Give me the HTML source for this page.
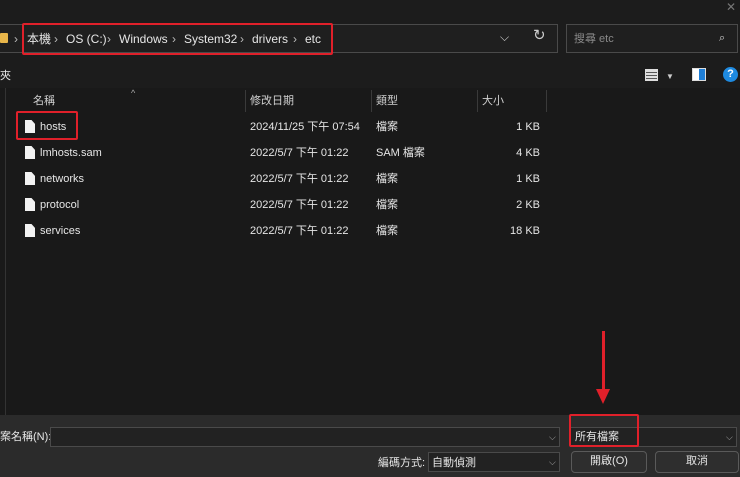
<!DOCTYPE html>
<html><head><meta charset="utf-8"><style>
body{margin:0;width:740px;height:477px;overflow:hidden;background:#1c1c1c;font-family:"Liberation Sans","Noto Sans CJK TC",sans-serif;color:#e6e6e6;position:relative;font-size:11px;line-height:14px}
div,span{position:absolute;box-sizing:border-box;line-height:14px}
.red{border:2px solid #e0202a;border-radius:2px}
.box{border:1px solid #4a4a4a;background:#1f1f1f}
.t{white-space:nowrap}
.hdr{color:#cfcfcf;top:94px}
.sep{width:1px;background:#3a3a3a;top:90px;height:22px}
.row{height:26px;left:0;width:560px}
.row span{top:7px;white-space:nowrap}
.fi{width:10px;height:13px;background:#f2f2f2;left:25px;top:7px;clip-path:polygon(0 0,65% 0,100% 30%,100% 100%,0 100%)}
.btn{border:1px solid #5a5a5a;background:#2e2e2e;border-radius:4px;text-align:center;line-height:19px}
.bc{top:32px;font-size:12px;white-space:nowrap}
.ch{top:32px;font-size:12px;color:#bbb}
</style></head><body>
<div class="t" style="right:4px;top:0;color:#777;font-size:12px">✕</div>
<div class="box" style="left:-2px;top:24px;width:560px;height:29px"></div>
<div style="left:0;top:33px;width:8px;height:10px;background:#e8b64a;border-radius:1px"></div>
<div class="ch" style="left:14px">›</div>
<div class="bc" style="left:27px">本機</div>
<div class="ch" style="left:54px">›</div>
<div class="bc" style="left:66px">OS (C:)</div>
<div class="ch" style="left:107px">›</div>
<div class="bc" style="left:119px">Windows</div>
<div class="ch" style="left:172px">›</div>
<div class="bc" style="left:184px">System32</div>
<div class="ch" style="left:240px">›</div>
<div class="bc" style="left:252px">drivers</div>
<div class="ch" style="left:293px">›</div>
<div class="bc" style="left:305px">etc</div>
<div class="red" style="left:22px;top:23px;width:311px;height:32px"></div>
<div class="t" style="left:500px;top:30px;color:#ccc;font-size:12px">⌵</div>
<div class="t" style="left:533px;top:29px;color:#ccc;font-size:15px">↻</div>
<div class="box" style="left:566px;top:24px;width:172px;height:29px"></div>
<div class="t" style="left:574px;top:32px;color:#888">搜尋 etc</div>
<div class="t" style="left:719px;top:31px;color:#ccc;font-size:11px">⌕</div>
<div class="t" style="left:0;top:69px">夾</div>
<div style="left:645px;top:69px;width:13px;height:12px;background:repeating-linear-gradient(#ddd 0 2px,#555 2px 3px);border:1px solid #ddd"></div>
<div class="t" style="left:666px;top:70px;color:#ccc;font-size:8px">▼</div>
<div style="left:692px;top:68px;width:14px;height:13px;background:linear-gradient(90deg,#fff 50%,#1e7fd8 50%);border:1px solid #ddd"></div>
<div style="left:723px;top:67px;width:15px;height:15px;border-radius:50%;background:#1e8ae0;color:#fff;font-size:11px;text-align:center;line-height:15px;font-weight:bold">?</div>
<div style="left:0;top:88px;width:740px;height:327px;background:#191919"></div>
<div style="left:5px;top:88px;width:1px;height:327px;background:#333"></div>
<div class="t hdr" style="left:33px">名稱</div>
<div class="t" style="left:131px;top:86px;color:#aaa;font-size:9px">^</div>
<div class="sep" style="left:245px"></div><div class="t hdr" style="left:250px">修改日期</div>
<div class="sep" style="left:371px"></div><div class="t hdr" style="left:376px">類型</div>
<div class="sep" style="left:477px"></div><div class="t hdr" style="left:482px">大小</div>
<div class="sep" style="left:546px"></div>
<div class="row" style="top:113px"><div class="fi"></div><span style="left:40px">hosts</span><span style="left:250px">2024/11/25 下午 07:54</span><span style="left:376px">檔案</span><span style="right:20px">1 KB</span></div>
<div class="row" style="top:139px"><div class="fi"></div><span style="left:40px">lmhosts.sam</span><span style="left:250px">2022/5/7 下午 01:22</span><span style="left:376px">SAM 檔案</span><span style="right:20px">4 KB</span></div>
<div class="row" style="top:165px"><div class="fi"></div><span style="left:40px">networks</span><span style="left:250px">2022/5/7 下午 01:22</span><span style="left:376px">檔案</span><span style="right:20px">1 KB</span></div>
<div class="row" style="top:191px"><div class="fi"></div><span style="left:40px">protocol</span><span style="left:250px">2022/5/7 下午 01:22</span><span style="left:376px">檔案</span><span style="right:20px">2 KB</span></div>
<div class="row" style="top:217px"><div class="fi"></div><span style="left:40px">services</span><span style="left:250px">2022/5/7 下午 01:22</span><span style="left:376px">檔案</span><span style="right:20px">18 KB</span></div>
<div class="red" style="left:16px;top:111px;width:62px;height:29px"></div>
<div style="left:0;top:415px;width:740px;height:62px;background:#2b2b2b"></div>
<div class="t" style="left:0;top:430px">案名稱(N):</div>
<div class="box" style="left:50px;top:427px;width:510px;height:20px;background:#222"></div>
<div class="t" style="left:549px;top:430px;color:#aaa;font-size:9px">⌵</div>
<div class="box" style="left:570px;top:427px;width:167px;height:20px;background:#222"></div>
<div class="t" style="left:575px;top:430px">所有檔案</div>
<div class="t" style="left:726px;top:430px;color:#aaa;font-size:9px">⌵</div>
<div class="red" style="left:569px;top:414px;width:70px;height:33px"></div>
<div class="t" style="left:378px;top:456px">編碼方式:</div>
<div class="box" style="left:428px;top:452px;width:132px;height:20px;background:#222"></div>
<div class="t" style="left:432px;top:456px">自動偵測</div>
<div class="t" style="left:549px;top:455px;color:#aaa;font-size:9px">⌵</div>
<div class="btn" style="left:571px;top:451px;width:76px;height:22px">開啟(O)</div>
<div class="btn" style="left:655px;top:451px;width:84px;height:22px">取消</div>
<div style="left:602px;top:331px;width:3px;height:60px;background:#e0202a"></div>
<div style="left:596px;top:389px;width:0;height:0;border-left:7px solid transparent;border-right:7px solid transparent;border-top:15px solid #e0202a"></div>
</body></html>
